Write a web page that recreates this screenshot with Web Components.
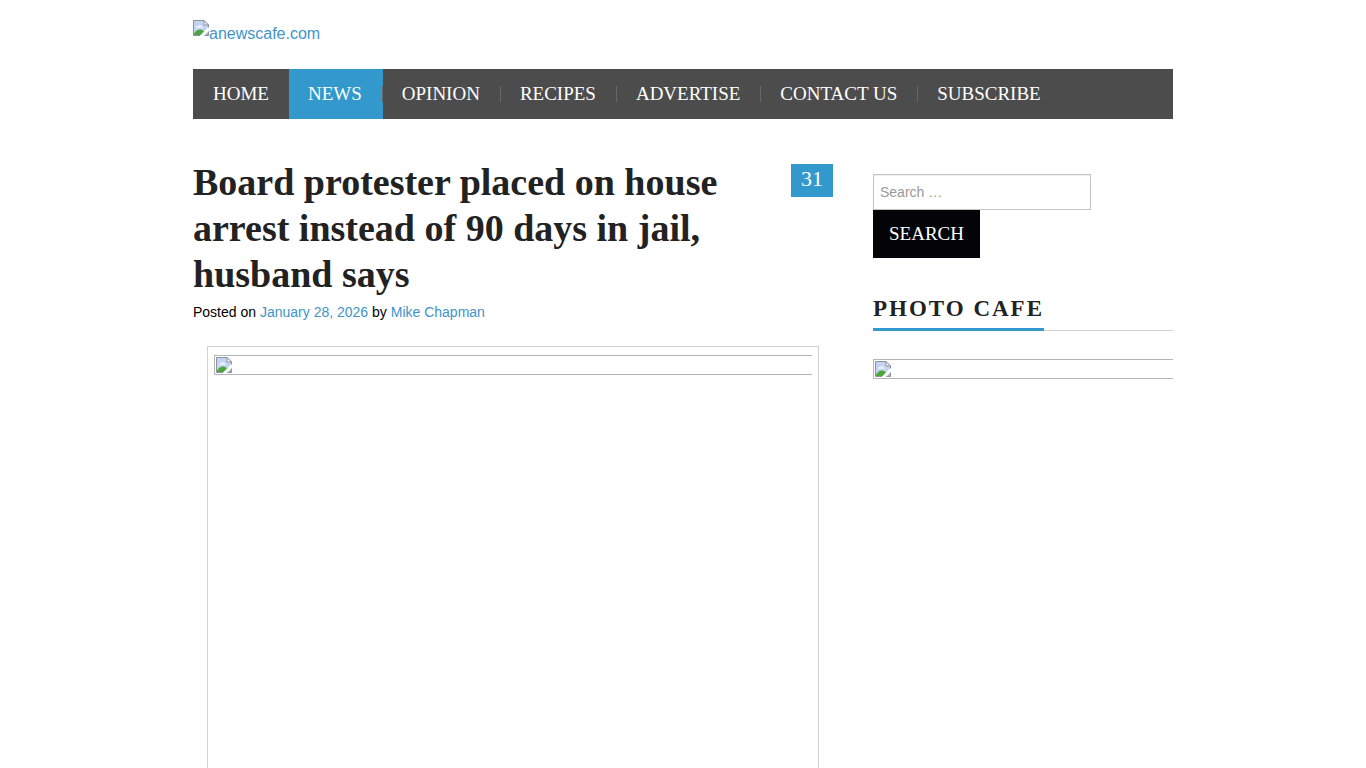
<!DOCTYPE html>
<html lang="en">
<head>
<meta charset="utf-8">
<title>Board protester placed on house arrest instead of 90 days in jail, husband says - anewscafe.com</title>
<style>
  :root {
    --accent: #3399cc;
    --link: #4194c8;
    --ink: #222;
    --bar: #4c4c4c;
    --serif: "Liberation Serif", "Times New Roman", serif;
    --sans: "Liberation Sans", Arial, sans-serif;
  }
  body { margin: 0; background: #fff; color: #000; font: 14px/20px var(--sans); }
</style>
</head>
<body>

<news-page>
  <site-logo slot="header" href="#">anewscafe.com</site-logo>
  <site-nav slot="header" current="News"></site-nav>

  <news-article comments="31" date="January 28, 2026" author="Mike Chapman">
    Board protester placed on house arrest instead of 90 days in jail, husband says
    <missing-image slot="media"></missing-image>
  </news-article>

  <search-form slot="sidebar"></search-form>
  <side-widget slot="sidebar" heading="Photo Cafe">
    <missing-image></missing-image>
  </side-widget>
</news-page>

<script>
const pictureIcon = `
  <svg width="16" height="16" viewBox="0 0 16 16" aria-hidden="true">
    <path d="M0.5 0.5H11L15.5 5V7L7.5 15.5H0.5Z" fill="#c3d4f3"/>
    <path d="M3 7.5C3 6 4.5 5.5 5.5 6C6 4.5 8.5 4.5 9 6.5C10 6.5 10 8 9 8H4C3.3 8 3 8 3 7.5Z" fill="#e8effb"/>
    <path d="M1 15V13.5C4 9 8 8.500 11 11.500L7.5 15Z" fill="#4ca63b"/>
    <path d="M16 7V10L10 16H7Z" fill="#fff"/>
    <path d="M11.500 15.5L15.5 11.500V15.5Z" fill="#9bb8a8"/>
    <path d="M7 15.5H0.5V0.5H11L15.5 5V7.500M11.500 15.5H15.5V11.500" fill="none" stroke="#8c9299"/>
    <path d="M11 0.5V5H15.5Z" fill="#fff" stroke="#8c9299"/>
  </svg>`;

function attach(el, html) {
  el.attachShadow({ mode: 'open' }).innerHTML = html;
}

class NewsPage extends HTMLElement {
  connectedCallback() {
    attach(this, `
      <style>
        :host { display: block; max-width: 980px; margin: 0 auto; }
        header { padding-top: 20px; }
        .columns { display: grid; grid-template-columns: minmax(0, 1fr) 300px; gap: 40px; padding-top: 40px; }
        aside { padding-top: 15px; }
      </style>
      <header><slot name="header"></slot></header>
      <div class="columns">
        <main><slot></slot></main>
        <aside><slot name="sidebar"></slot></aside>
      </div>`);
  }
}

class SiteLogo extends HTMLElement {
  connectedCallback() {
    attach(this, `
      <style>
        :host { display: block; padding-bottom: 21px; }
        a { display: flex; align-items: flex-start; color: var(--link); font-size: 16px; line-height: 28px; text-decoration: none; }
      </style>
      <a href="${this.getAttribute('href')}">${pictureIcon}<slot></slot></a>`);
  }
}

class SiteNav extends HTMLElement {
  connectedCallback() {
    const items = ['Home', 'News', 'Opinion', 'Recipes', 'Advertise', 'Contact Us', 'Subscribe'];
    const current = this.getAttribute('current');
    attach(this, `
      <style>
        :host { display: block; background: var(--bar); }
        ul { display: flex; flex-wrap: wrap; margin: 0; padding: 0; list-style: none; }
        li { display: flex; align-items: center; }
        li.current { background: var(--accent); }
        a { padding: 0 20px 0 19px; color: #fff; font: 19px/50px var(--serif); text-transform: uppercase; text-decoration: none; }
        li:first-child a { padding: 0 19px 0 20px; }
        li::after { content: ""; width: 1px; height: 16px; background: #666; }
        li:first-child::after, li:last-child::after { background: none; }
      </style>
      <nav aria-label="Main">
        <ul>
          ${items.map(item => `<li${item === current ? ' class="current"' : ''}><a href="#">${item}</a></li>`).join('')}
        </ul>
      </nav>`);
  }
}

class NewsArticle extends HTMLElement {
  connectedCallback() {
    attach(this, `
      <style>
        :host { display: block; }
        .top { display: flex; justify-content: space-between; align-items: flex-start; gap: 40px; }
        h1 { margin: 0; color: var(--ink); font: bold 38px/46px var(--serif); }
        a { color: var(--link); text-decoration: none; }
        .comments { margin-top: 5px; padding: 0 10px 3px; background: var(--accent); color: #fff; font: 22px/30px var(--serif); }
        .meta { margin: 5px 0 24px; }
        figure { box-sizing: border-box; min-height: 480px; margin: 0 14px; padding: 8px 6px; border: 1px solid #d3d3d3; }
      </style>
      <article>
        <div class="top">
          <h1><slot></slot></h1>
          <a class="comments" href="#">${this.getAttribute('comments')}</a>
        </div>
        <p class="meta">Posted on <a href="#">${this.getAttribute('date')}</a> by <a href="#">${this.getAttribute('author')}</a></p>
        <figure><slot name="media"></slot></figure>
      </article>`);
  }
}

class MissingImage extends HTMLElement {
  connectedCallback() {
    attach(this, `
      <style>
        :host { display: block; border: 1px solid #b5b5b5; border-right: 0; padding: 1px; }
        svg { display: block; }
      </style>
      ${pictureIcon}`);
  }
}

class SearchForm extends HTMLElement {
  connectedCallback() {
    attach(this, `
      <style>
        :host { display: block; }
        form { display: flex; flex-direction: column; align-items: flex-start; }
        input { box-sizing: border-box; width: 218px; height: 36px; padding: 0 6px; border: 1px solid #c4c4c4; background: #fff; box-shadow: inset 0 1px 1px #eee; font: 14px/20px var(--sans); }
        input::placeholder { color: #999; opacity: 1; }
        button { padding: 0 16px; border: 0; background: #040408; color: #fff; font: 19px/48px var(--serif); text-transform: uppercase; }
      </style>
      <form role="search">
        <input type="text" placeholder="Search …" aria-label="Search">
        <button type="button">Search</button>
      </form>`);
  }
}

class SideWidget extends HTMLElement {
  connectedCallback() {
    attach(this, `
      <style>
        :host { display: block; padding-top: 34px; }
        h2 { display: flex; margin: 0 0 28px; border-bottom: 1px solid #d3d3d3; color: var(--ink); font: bold 23px/34px var(--serif); letter-spacing: 2px; text-transform: uppercase; }
        h2 span { margin-bottom: -1px; padding-bottom: 2px; border-bottom: 3px solid var(--accent); }
      </style>
      <section>
        <h2><span>${this.getAttribute('heading')}</span></h2>
        <slot></slot>
      </section>`);
  }
}

customElements.define('news-page', NewsPage);
customElements.define('site-logo', SiteLogo);
customElements.define('site-nav', SiteNav);
customElements.define('news-article', NewsArticle);
customElements.define('missing-image', MissingImage);
customElements.define('search-form', SearchForm);
customElements.define('side-widget', SideWidget);
</script>
</body>
</html>
